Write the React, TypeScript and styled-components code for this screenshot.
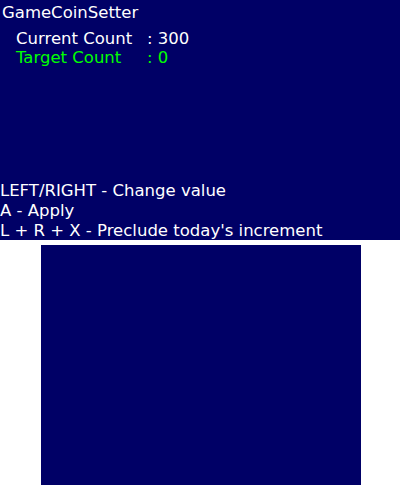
import * as React from 'react';
import styled, { createGlobalStyle } from 'styled-components';

const GlobalStyle = createGlobalStyle`
  html, body {
    margin: 0;
    padding: 0;
    background: #ffffff;
  }
`;

const Console = styled.div`
  width: 400px;
  height: 485px;
  display: flex;
  flex-direction: column;
  align-items: center;
  gap: 5px;
  background: #ffffff;
  font-family: 'DejaVu Sans', 'Liberation Sans', sans-serif;
  font-size: 16.5px;
  color: #ffffff;
`;

const TopScreen = styled.div`
  width: 400px;
  height: 240px;
  background: #000066;
  display: flex;
  flex-direction: column;
  justify-content: space-between;
  box-sizing: border-box;
`;

const BottomScreen = styled.div`
  width: 320px;
  height: 240px;
  margin-left: 2px;
  background: #000066;
`;

const Title = styled.div`
  line-height: 20px;
  padding: 3px 0 0 2px;
`;

const Fields = styled.div`
  display: grid;
  grid-template-columns: 131px auto;
  padding: 6px 0 0 16px;
  line-height: 19px;
`;

const Cell = styled.span<{ $active?: boolean }>`
  color: ${(p) => (p.$active ? '#00ff00' : '#ffffff')};
  white-space: pre;
`;

const Help = styled.div`
  line-height: 20px;
  margin-bottom: -1px;
`;

const rows = [
  { label: 'Current Count', value: '300', active: false },
  { label: 'Target Count', value: '0', active: true },
];

const App = (): JSX.Element => {
  return (
    <>
      <GlobalStyle />
      <Console>
        <TopScreen>
          <div>
            <Title>GameCoinSetter</Title>
            <Fields>
              {rows.map((r) => (
                <React.Fragment key={r.label}>
                  <Cell $active={r.active}>{r.label}</Cell>
                  <Cell $active={r.active}>: {r.value}</Cell>
                </React.Fragment>
              ))}
            </Fields>
          </div>
          <Help>
            <div>LEFT/RIGHT - Change value</div>
            <div>A - Apply</div>
            <div>L + R + X - Preclude today's increment</div>
          </Help>
        </TopScreen>
        <BottomScreen />
      </Console>
    </>
  );
};

export default App;
